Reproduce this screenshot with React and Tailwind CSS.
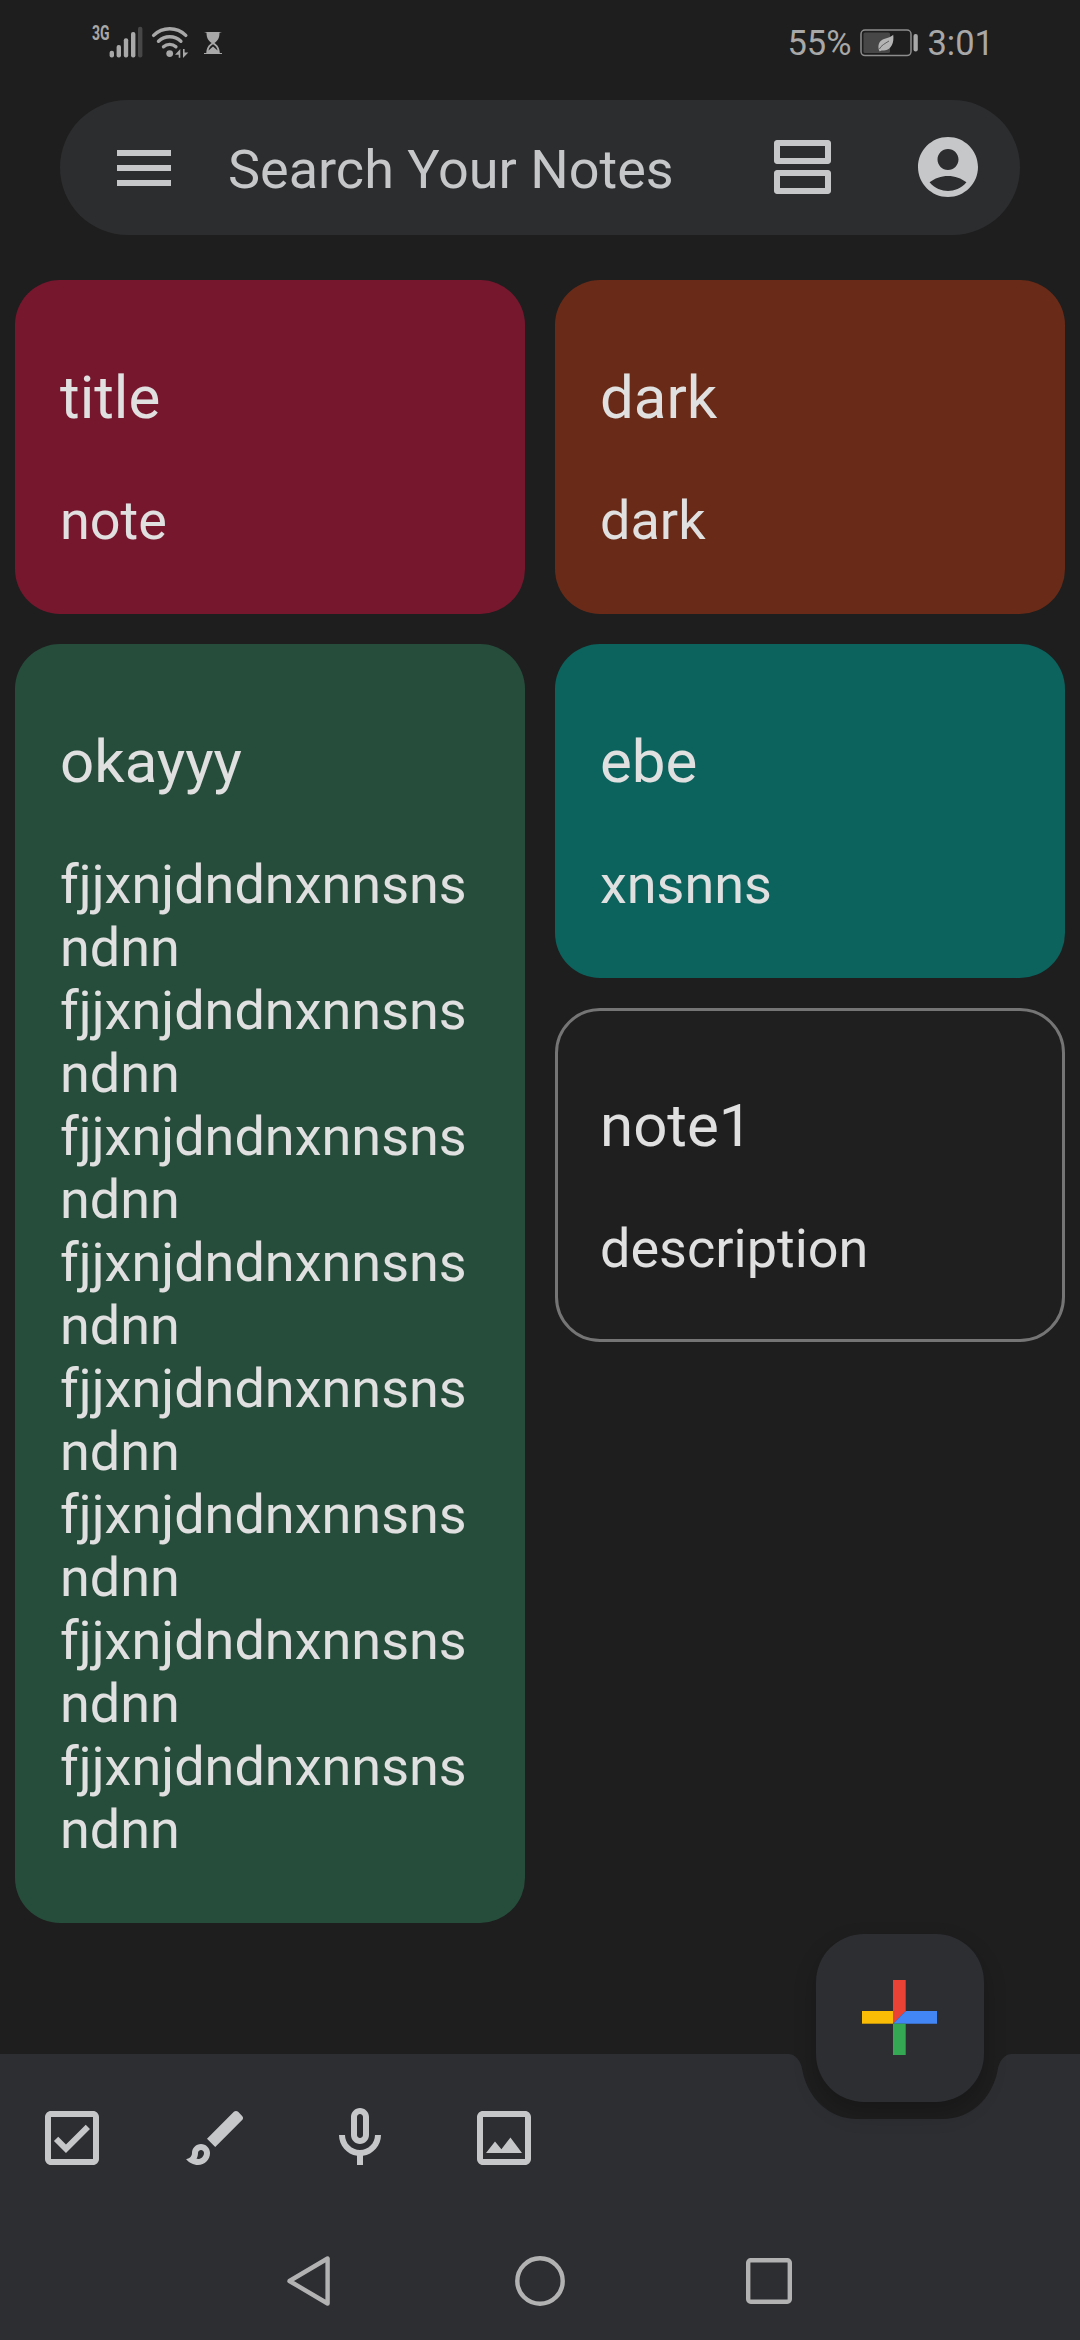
import React from "react";

const LONG_NOTE = Array(8).fill("fjjxnjdndnxnnsnsndnn").join("\n");

const COLUMNS = [
  [
    { title: "title", body: "note", tone: "bg-[#77172e]" },
    { title: "okayyy", body: LONG_NOTE, tone: "bg-[#264d3b]" },
  ],
  [
    { title: "dark", body: "dark", tone: "bg-[#692b17]" },
    { title: "ebe", body: "xnsnns", tone: "bg-[#0c625d]" },
    { title: "note1", body: "description", tone: "bg-[#1f1f1f] border-3 border-[#757575]" },
  ],
];

const ICONS = {
  menu: "M3 18h18v-2H3v2zm0-5h18v-2H3v2zm0-7v2h18V6H3z",
  agenda:
    "M20 13H3c-.55 0-1 .45-1 1v6c0 .55.45 1 1 1h17c.55 0 1-.45 1-1v-6c0-.55-.45-1-1-1zm-1 6H4v-4h15v4zM20 3H3c-.55 0-1 .45-1 1v6c0 .55.45 1 1 1h17c.55 0 1-.45 1-1V4c0-.55-.45-1-1-1zm-1 6H4V5h15v4z",
  account:
    "M12 2C6.48 2 2 6.48 2 12s4.48 10 10 10 10-4.48 10-10S17.52 2 12 2zm0 4c1.93 0 3.5 1.57 3.5 3.5S13.93 13 12 13s-3.5-1.57-3.5-3.5S10.07 6 12 6zm0 14c-2.03 0-4.43-.82-6.14-2.88C7.55 15.8 9.68 15 12 15s4.45.8 6.14 2.12C16.43 19.18 14.03 20 12 20z",
  check:
    "M19 3H5c-1.1 0-2 .9-2 2v14c0 1.1.9 2 2 2h14c1.1 0 2-.9 2-2V5c0-1.1-.9-2-2-2zm0 16H5V5h14v14zM17.99 9l-1.41-1.42-6.59 6.59-2.58-2.57-1.42 1.41 4 3.99z",
  brush:
    "M7 16c.55 0 1 .45 1 1 0 1.1-.9 2-2 2-.17 0-.33-.02-.5-.05.31-.55.5-1.21.5-1.95 0-.55.45-1 1-1M18.67 3c-.26 0-.51.1-.71.29L9 12.25 11.75 15l8.96-8.96c.39-.39.39-1.02 0-1.41l-1.34-1.34c-.2-.2-.45-.29-.7-.29zM7 14c-1.66 0-3 1.34-3 3 0 1.31-1.16 2-2 2 .92 1.22 2.49 2 4 2 2.21 0 4-1.79 4-4 0-1.66-1.34-3-3-3z",
  mic: "M12 14c1.66 0 3-1.34 3-3V5c0-1.66-1.34-3-3-3S9 3.34 9 5v6c0 1.66 1.34 3 3 3zm-1-9c0-.55.45-1 1-1s1 .45 1 1v6c0 .55-.45 1-1 1s-1-.45-1-1V5zm6 6c0 2.76-2.24 5-5 5s-5-2.24-5-5H5c0 3.53 2.61 6.43 6 6.92V21h2v-3.08c3.39-.49 6-3.39 6-6.92h-2z",
  image:
    "M19 5v14H5V5h14m0-2H5c-1.1 0-2 .9-2 2v14c0 1.1.9 2 2 2h14c1.1 0 2-.9 2-2V5c0-1.1-.9-2-2-2zm-4.86 8.86l-3 3.87L9 13.14 6 17h12l-3.86-5.14z",
};

function Icon({ name, label, className = "" }) {
  return (
    <button aria-label={label} className={`block size-[72px] shrink-0 text-[#c6c7c9] ${className}`}>
      <svg viewBox="0 0 24 24" className="size-full" fill="currentColor" fillRule="evenodd">
        <path d={ICONS[name]} />
      </svg>
    </button>
  );
}

function SignalIcons() {
  return (
    <svg viewBox="109 22 114 40" className="mt-[22px] -ml-px h-[40px] w-[114px]" fill="none">
      <g fill="#a8a8a8">
        <rect x="109.6" y="50.7" width="4.4" height="6.8" rx="2" />
        <rect x="116.6" y="45" width="4.4" height="12.5" rx="2" />
        <rect x="123.8" y="38.3" width="4.4" height="19.2" rx="2" />
        <rect x="131" y="32" width="4.4" height="25.5" rx="2" />
        <rect x="138" y="26.7" width="4.4" height="30.8" rx="2" fill="#474747" />
      </g>
      <g stroke="#a8a8a8" strokeWidth="3.4" strokeLinecap="round">
        <path d="M153.6 35.4C162.5 26.6 176.9 26.6 185.8 35.4" />
        <path d="M158.5 41.3C164.8 35.3 174.6 35.3 180.9 41.3" />
        <path d="M163.5 46.8C167 43.6 172.400 43.6 175.9 46.8" />
      </g>
      <g fill="#a8a8a8">
        <circle cx="169.7" cy="53.6" r="3.4" />
        <path d="M175 54.8L180.3 49V57.7H178.700V54.8Z" />
        <path d="M188.300 52.4L183 58V49H184.6V52.4Z" />
        <path
          fillRule="evenodd"
          d="M204 32H222L219.5 32.8C219.5 38.5 217.5 41 214.4 43C217.5 45 219.5 47.5 219.8 53H222V54H204V53H206.3C206.6 47.5 208.6 45 211.7 43C208.6 41 206.6 38.5 206.5 32.8ZM208.5 50.5L213 46.5L217.6 50.5C217 47.5 215.5 45.6 213 44.2C210.5 45.6 209 47.5 208.5 50.5Z"
        />
      </g>
    </svg>
  );
}

function Battery() {
  return (
    <svg viewBox="0 0 58 28" className="mt-[28.5px] ml-[9px] h-[28px] w-[58px]" fill="none">
      <rect x="1" y="1" width="50" height="25.6" rx="4" stroke="#8d8d8d" strokeWidth="1.5" />
      <rect x="3.5" y="3.5" width="26.5" height="20.6" rx="1.5" fill="#474747" />
      <rect x="53.5" y="5" width="4.3" height="17.5" rx="2" fill="#a8a8a8" />
      <path
        d="M33.2 5.800C34.3 13.5 31.5 21 24 21.6C22.5 21.7 21 21.2 19.8 22.6C17.5 19 18 13.5 22 11C25.5 8.9 30.5 9 33.2 5.8Z"
        fill="#b4b4b4"
      />
      <path d="M19.4 20C21 16.5 25 14.5 29 12" stroke="#555" strokeWidth=".9" />
    </svg>
  );
}

function StatusBar() {
  return (
    <header className="flex h-[100px] items-start justify-between pr-[86px] pl-[92px] text-[#a8a8a8]">
      <div className="flex items-start">
        <div className="mt-[22px] w-[18px]">
          <span className="block origin-left scale-x-[.7] text-[20px] leading-[23px] font-bold">3G</span>
        </div>
        <SignalIcons />
      </div>
      <div className="flex items-start">
        <span className="mt-[23px] text-[34.5px] leading-[40px]">55%</span>
        <Battery />
        <span className="mt-[23px] ml-[9px] text-[34.5px] leading-[40px]">3:01</span>
      </div>
    </header>
  );
}

function SearchBar() {
  return (
    <div className="mx-[60px] flex h-[135px] items-start rounded-full bg-[#2c2d2f]">
      <Icon name="menu" label="Menu" className="mt-[32px] ml-12" />
      <span className="mt-[38px] ml-12 flex-1 text-[54px] leading-[63px] whitespace-nowrap text-[#c6c7c9]">
        Search Your Notes
      </span>
      <Icon name="agenda" label="Layout" className="mt-[31px]" />
      <Icon name="account" label="Account" className="mt-[31px] mr-9 ml-[72px]" />
    </div>
  );
}

function Note({ title, body, tone }) {
  return (
    <article className={`rounded-[45px] ${tone}`}>
      <div className={tone.includes("border") ? "-m-[3px]" : ""}>
        <div className="px-[45px] pt-[83px] pb-[62px] text-[#e0e0e0]">
          <h2 className="text-[60px] leading-[70px]">{title}</h2>
          <p className="mt-[56px] text-[54px] leading-[63px] break-all whitespace-pre-line">{body}</p>
        </div>
      </div>
    </article>
  );
}

function Fab() {
  return (
    <button
      aria-label="New note"
      className="absolute -top-[120px] right-[96px] flex size-[168px] items-center justify-center rounded-[48px] bg-[#2d2e32] shadow-[0_10px_22px_rgba(0,0,0,0.22)]"
    >
      <svg viewBox="862 1980 75 75" className="-mt-px -ml-px size-[75px]">
        <path d="M893 1980H905.7V2011L893 2023.7Z" fill="#ea4335" />
        <path d="M862 2011H893V2023.7H862Z" fill="#fbbc05" />
        <path d="M905.7 2011H937V2023.7H893Z" fill="#4285f4" />
        <path d="M893 2023.7H905.7V2055H893Z" fill="#34a853" />
      </svg>
    </button>
  );
}

function BottomBar() {
  return (
    <footer className="relative h-[286px] shrink-0">
      <svg viewBox="0 0 1080 286" className="absolute inset-0 size-full">
        <path
          d="M0 0H788C795 0 801 6 802.5 17C808 45 830 65 857 65H943C970 65 992 45 997.5 17C999 6 1005 0 1012 0H1080V286H0Z"
          fill="#2d2e32"
        />
      </svg>
      <Fab />
      <div className="relative flex h-[168px] w-[576px] gap-[72px] pt-12 pl-9">
        <Icon name="check" label="New list" />
        <Icon name="brush" label="New drawing" />
        <Icon name="mic" label="New audio note" />
        <Icon name="image" label="New image note" />
      </div>
      <nav className="relative flex justify-center gap-[173px] pt-[31px]">
        <svg viewBox="0 0 56 56" className="size-14" fill="none" stroke="#b2b2b2" strokeWidth="4.4" strokeLinejoin="round">
          <path d="M6.5 28L44.6 5.5V50.5Z" />
        </svg>
        <svg viewBox="0 0 56 56" className="size-14" fill="none" stroke="#b2b2b2" strokeWidth="4.4">
          <circle cx="28" cy="28" r="22.7" />
        </svg>
        <svg viewBox="0 0 56 56" className="size-14" fill="none" stroke="#b2b2b2" strokeWidth="4.4">
          <rect x="7.200" y="7.2" width="41.6" height="41.6" rx="2.5" />
        </svg>
      </nav>
    </footer>
  );
}

export default function App() {
  return (
    <div className="flex h-[2340px] w-[1080px] flex-col overflow-hidden bg-[#1e1e1e] font-['Roboto',sans-serif]">
      <StatusBar />
      <SearchBar />
      <main className="grid flex-1 grid-cols-2 gap-[30px] px-[15px] pt-[45px]">
        {COLUMNS.map((notes, i) => (
          <div key={i} className="flex flex-col gap-[30px]">
            {notes.map((note) => (
              <Note key={note.title} {...note} />
            ))}
          </div>
        ))}
      </main>
      <BottomBar />
    </div>
  );
}
